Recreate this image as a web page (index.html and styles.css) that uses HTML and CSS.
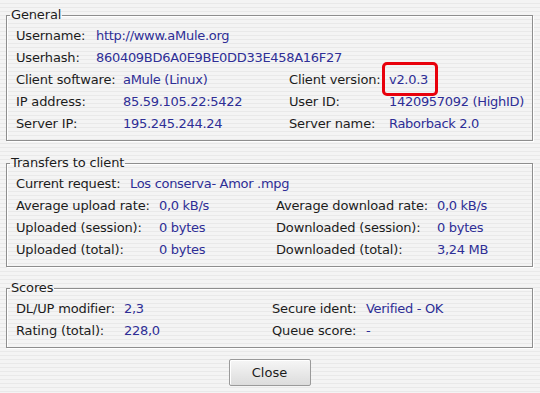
FILE: index.html
```html
<!DOCTYPE html>
<html lang="en">
<head>
    <meta charset="UTF-8">
    <title>Client details</title>
    <link rel="stylesheet" href="styles.css">
</head>
<body>
    <div class="dialog">
        <fieldset class="box">
            <legend>General</legend>
            <div class="grid g-top">
                <span class="lbl">Username:</span><span class="val">http://www.aMule.org</span>
                <span class="lbl">Userhash:</span><span class="val">860409BD6A0E9BE0DD33E458A16F27</span>
            </div>
            <div class="grid g-main">
                <span class="lbl">Client software:</span><span class="val">aMule (Linux)</span>
                <span class="lbl">Client version:</span><span class="val"><span class="mark">v2.0.3</span></span>
                <span class="lbl">IP address:</span><span class="val">85.59.105.22:5422</span>
                <span class="lbl">User ID:</span><span class="val">1420957092 (HighID)</span>
                <span class="lbl">Server IP:</span><span class="val">195.245.244.24</span>
                <span class="lbl">Server name:</span><span class="val">Raborback 2.0</span>
            </div>
        </fieldset>

        <fieldset class="box">
            <legend>Transfers to client</legend>
            <div class="grid t-top">
                <span class="lbl">Current request:</span><span class="val">Los conserva- Amor .mpg</span>
            </div>
            <div class="grid t-main">
                <span class="lbl">Average upload rate:</span><span class="val">0,0 kB/s</span>
                <span class="lbl">Average download rate:</span><span class="val">0,0 kB/s</span>
                <span class="lbl">Uploaded (session):</span><span class="val">0 bytes</span>
                <span class="lbl">Downloaded (session):</span><span class="val">0 bytes</span>
                <span class="lbl">Uploaded (total):</span><span class="val">0 bytes</span>
                <span class="lbl">Downloaded (total):</span><span class="val">3,24 MB</span>
            </div>
        </fieldset>

        <fieldset class="box">
            <legend>Scores</legend>
            <div class="grid s-main">
                <span class="lbl">DL/UP modifier:</span><span class="val">2,3</span>
                <span class="lbl">Secure ident:</span><span class="val">Verified - OK</span>
                <span class="lbl">Rating (total):</span><span class="val">228,0</span>
                <span class="lbl">Queue score:</span><span class="val">-</span>
            </div>
        </fieldset>

        <div class="buttons">
            <button class="close-btn">Close</button>
        </div>
    </div>
</body>
</html>
```

FILE: styles.css
```css
html, body {
    margin: 0;
    height: 100%;
}
body {
    background: repeating-linear-gradient(to bottom, #f4f4f4 0, #f4f4f4 3px, #e9e9e9 3px, #e9e9e9 4px);
    font-family: 'DejaVu Sans', sans-serif;
    font-size: 13px;
    letter-spacing: -0.15px;
    color: #1c1c1c;
}
.dialog { padding: 7px 7px 0 6px; }

.box {
    margin: 0 0 14px 0;
    padding: 2px 8px 5px 9px;
    border: 1px solid #8e8e8e;
    box-shadow: 1px 1px 0 #fff, inset 1px 1px 0 #fff;
    min-width: 0;
}
.box + .box { margin-bottom: 13px; }
.box + .box + .box { margin-bottom: 11px; }
.box legend {
    margin-left: -6px;
    padding: 0 1px;
    line-height: 16px;
}

.grid { display: grid; line-height: 22px; white-space: nowrap; }
.g-top { grid-template-columns: 80px auto; }
.g-main { grid-template-columns: 107px 166px 100px auto; }
.t-top { grid-template-columns: 114px auto; }
.t-main { grid-template-columns: 143px 117px 161px auto; }
.s-main { grid-template-columns: 108px 148px 94px auto; }

.val { color: #2e2e96; letter-spacing: -0.3px; }

.mark { position: relative; }
.mark::after {
    content: "";
    position: absolute;
    left: -7px;
    right: -10px;
    top: -10px;
    bottom: -9px;
    border: 3px solid #e8000b;
    border-radius: 5px;
}

.buttons { display: flex; justify-content: center; }
.close-btn {
    width: 82px;
    height: 27px;
    font-family: 'DejaVu Sans', sans-serif;
    font-size: 13px;
    color: #1c1c1c;
    background: linear-gradient(to bottom, #f6f6f6, #dcdcdc);
    border: 1px solid #9a9a9a;
    border-radius: 2px;
    box-shadow: inset 1px 1px 0 #fff;
}
```
